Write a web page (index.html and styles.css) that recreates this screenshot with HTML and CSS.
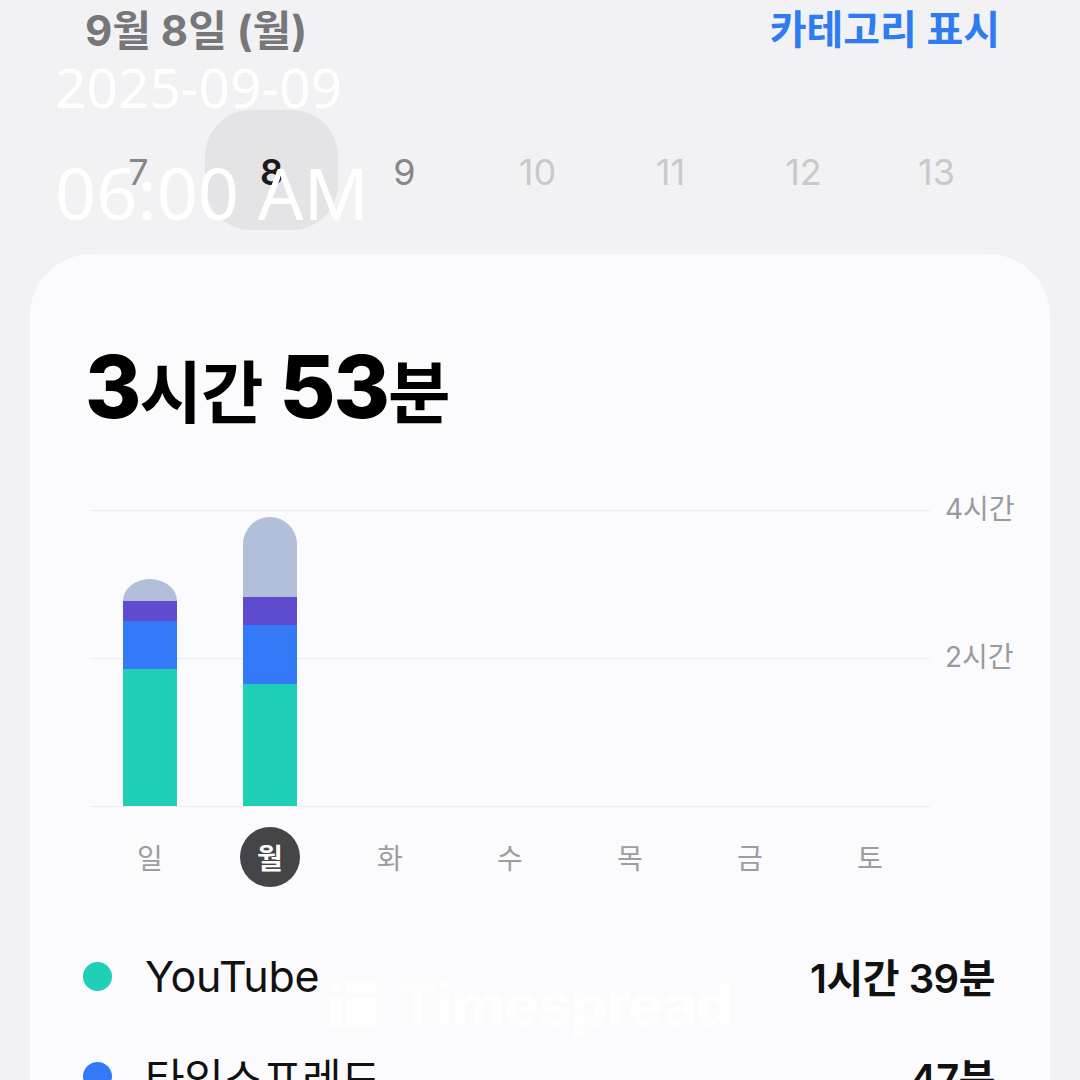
FILE: index.html
```html
<!DOCTYPE html>
<html lang="ko">
<head>
<meta charset="utf-8">
<title>스크린 타임</title>
<link rel="stylesheet" href="styles.css">
</head>
<body>
<div class="screen">
  <header class="top">
    <div class="date-title">9월 8일 (월)</div>
    <div class="cat-link">카테고리 표시</div>
  </header>

  <div class="days">
    <div class="day dim">7</div>
    <div class="day sel">8</div>
    <div class="day dim">9</div>
    <div class="day future">10</div>
    <div class="day future">11</div>
    <div class="day future">12</div>
    <div class="day future">13</div>
  </div>

  <section class="card">
    <h1 class="total">3<span class="unit">시간</span> 53<span class="unit">분</span></h1>

    <div class="chart">
      <div class="plot">
        <div class="grid g4"></div>
        <div class="grid g2"></div>
        <div class="grid g0"></div>
        <div class="bars">
          <div class="col">
            <div class="bar">
              <div class="seg gray cap short" style="height:22px"></div>
              <div class="seg purple" style="height:20px"></div>
              <div class="seg blue" style="height:48px"></div>
              <div class="seg teal" style="height:137px"></div>
            </div>
          </div>
          <div class="col">
            <div class="bar">
              <div class="seg gray cap" style="height:80px"></div>
              <div class="seg purple" style="height:28px"></div>
              <div class="seg blue" style="height:59px"></div>
              <div class="seg teal" style="height:122px"></div>
            </div>
          </div>
          <div class="col"></div>
          <div class="col"></div>
          <div class="col"></div>
          <div class="col"></div>
          <div class="col"></div>
        </div>
      </div>
      <div class="axis">
        <span class="tick t4">4시간</span>
        <span class="tick t2">2시간</span>
      </div>
    </div>

    <div class="weekdays">
      <div class="wd">일</div>
      <div class="wd"><span class="wd-sel">월</span></div>
      <div class="wd">화</div>
      <div class="wd">수</div>
      <div class="wd">목</div>
      <div class="wd">금</div>
      <div class="wd">토</div>
    </div>

    <ul class="legend">
      <li class="row">
        <span class="dot teal"></span>
        <span class="app">YouTube</span>
        <span class="time">1시간 39분</span>
      </li>
      <li class="row">
        <span class="dot blue"></span>
        <span class="app">타임스프레드</span>
        <span class="time">47분</span>
      </li>
    </ul>

    <div class="watermark">
      <svg class="wm-icon" width="46" height="46" viewBox="0 0 46 46" aria-hidden="true">
        <rect x="0" y="0" width="12" height="12" rx="6" fill="#fff"/>
        <rect x="16" y="0" width="30" height="12" fill="#fff"/>
        <rect x="0" y="16" width="12" height="30" fill="#fff"/>
        <rect x="16" y="16" width="30" height="30" fill="#fff"/>
      </svg>
      <span class="wm-text">Timespread</span>
    </div>
  </section>

  <div class="stamp-date">2025-09-09</div>
  <div class="stamp-time">06:00 AM</div>
</div>
</body>
</html>
```

FILE: styles.css
```css
* { box-sizing: border-box; }

html, body {
  margin: 0;
  padding: 0;
}

body {
  width: 1080px;
  height: 1080px;
  overflow: hidden;
  background: #f2f2f5;
  font-family: Inter, "Noto Sans CJK KR", sans-serif;
  color: #000;
}

.screen {
  position: relative;
  width: 1080px;
  height: 1080px;
  overflow: hidden;
}

/* header */
.top {
  display: flex;
  justify-content: space-between;
  align-items: center;
  height: 54px;
  padding: 0 80px 0 85px;
}

.date-title {
  font-size: 42px;
  font-weight: 700;
  color: #77777b;
}

.cat-link {
  font-size: 40px;
  font-weight: 700;
  color: #2f7bf0;
}

/* day strip */
.days {
  display: flex;
  margin-top: 56px;
  padding-left: 72px;
}

.day {
  width: 133px;
  height: 120px;
  display: flex;
  align-items: center;
  justify-content: center;
  font-size: 36px;
  font-weight: 400;
  padding-top: 4px;
}

.day.dim { color: #87878b; }
.day.future { color: #c9c9cc; }
.day.sel {
  background: #e4e4e7;
  border-radius: 46px;
  color: #1a1a1a;
  font-weight: 600;
}

/* card */
.card {
  margin: 24px 30px 0;
  height: 900px;
  background: #fbfbfd;
  border-radius: 62px 62px 0 0;
  position: relative;
  padding-top: 90px;
}

.total {
  margin: 0 0 0 55px;
  font-size: 86px;
  font-weight: 800;
  line-height: 86px;
  letter-spacing: -2px;
}

.total .unit {
  font-size: 68px;
  font-weight: 700;
  letter-spacing: -1px;
}

/* chart */
.chart {
  display: flex;
  margin-top: 74px;
  margin-left: 60px;
}

.plot {
  position: relative;
  width: 840px;
  height: 297px;
}

.grid {
  position: absolute;
  left: 0;
  right: 0;
  height: 1px;
  background: #ececf0;
}
.g4 { top: 0; }
.g2 { top: 148px; }
.g0 { top: 296px; }

.bars {
  position: relative;
  display: flex;
  height: 296px;
  align-items: flex-end;
}

.col {
  width: 120px;
  display: flex;
  justify-content: center;
}

.bar {
  width: 54px;
  display: flex;
  flex-direction: column;
}

.seg { width: 100%; }
.seg.gray { background: #b1bfd9; }
.seg.purple { background: #5e4bcf; }
.seg.blue { background: #3479f7; }
.seg.teal { background: #1fcfb6; }

.cap { border-radius: 27px 27px 0 0; }
.cap.short { border-radius: 27px 27px 0 0 / 22px 22px 0 0; }

.axis {
  position: relative;
  width: 100px;
}

.tick {
  position: absolute;
  left: 15px;
  font-size: 28px;
  color: #9a9a9e;
  line-height: 30px;
  white-space: nowrap;
}
.t4 { top: -16px; }
.t2 { top: 132px; }

/* weekday labels */
.weekdays {
  display: flex;
  margin-left: 60px;
  margin-top: 19px;
}

.wd {
  width: 120px;
  height: 62px;
  display: flex;
  align-items: center;
  justify-content: center;
  font-size: 28px;
  color: #9d9da1;
}

.wd-sel {
  width: 60px;
  height: 60px;
  border-radius: 50%;
  background: #454547;
  color: #fff;
  font-weight: 700;
  display: flex;
  align-items: center;
  justify-content: center;
}

/* legend */
.legend {
  list-style: none;
  margin: 38px 0 0;
  padding: 0 55px 0 53px;
}

.row {
  display: flex;
  align-items: center;
  height: 100px;
}

.dot {
  width: 29px;
  height: 29px;
  border-radius: 50%;
  flex: none;
}
.dot.teal { background: #1fcfb6; }
.dot.blue { background: #3479f7; }

.app {
  margin-left: 33px;
  font-size: 43px;
  font-weight: 400;
  color: #111;
  flex: 1;
  letter-spacing: -0.3px;
}

.time {
  font-size: 40px;
  font-weight: 600;
  color: #111;
  letter-spacing: -0.5px;
}

/* watermark over legend */
.watermark {
  position: absolute;
  left: 300px;
  top: 715px;
  display: flex;
  align-items: center;
  gap: 22px;
  opacity: 0.95;
}

.wm-text {
  font-family: Inter, sans-serif;
  font-size: 58px;
  font-weight: 800;
  color: #fff;
  letter-spacing: -1px;
}

/* overlay stamps */
.stamp-date,
.stamp-time {
  position: absolute;
  left: 55px;
  color: #fff;
  font-family: "Noto Sans", sans-serif;
  font-weight: 400;
  line-height: 1;
}

.stamp-date {
  top: 59px;
  font-size: 55px;
}

.stamp-time {
  top: 156px;
  font-size: 72px;
}
```
